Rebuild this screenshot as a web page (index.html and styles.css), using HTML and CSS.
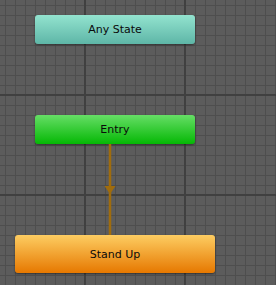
FILE: index.html
```html
<!DOCTYPE html>
<html>
<head>
<meta charset="utf-8">
<link rel="stylesheet" href="styles.css">
</head>
<body>
<div class="canvas">
  <div class="node any">Any State</div>
  <div class="node entry">Entry</div>
  <svg class="link" width="20" height="92" viewBox="0 0 20 92">
    <line x1="10" y1="0" x2="10" y2="92" stroke="#a06c0c" stroke-width="2.5"/>
    <polygon points="4.5,42 15.5,42 10,50" fill="#a06c0c"/>
  </svg>
  <div class="node stand">Stand Up</div>
</div>
</body>
</html>
```
FILE: styles.css
```css
html, body {
  margin: 0;
  padding: 0;
}
body {
  width: 276px;
  height: 285px;
  overflow: hidden;
  background: #5b5b5b;
}
.canvas {
  position: relative;
  width: 276px;
  height: 285px;
  background-color: #5c5c5c;
  background-image:
    linear-gradient(to right, transparent 84px, #404040 84px, #404040 86px, transparent 86px),
    linear-gradient(to bottom, transparent 94px, #404040 94px, #404040 96px, transparent 96px),
    linear-gradient(to right, transparent 5px, #4e4e4e 5px, #4e4e4e 6px, transparent 6px),
    linear-gradient(to bottom, transparent 5px, #4e4e4e 5px, #4e4e4e 6px, transparent 6px);
  background-size: 100px 100px, 100px 100px, 10px 10px, 10px 10px;
  background-position: 0 0, 0 0, 0 0, 0 0;
  font-family: "DejaVu Sans", Verdana, sans-serif;
  font-size: 11px;
  color: #0a0a0a;
}
.node {
  position: absolute;
  display: flex;
  align-items: center;
  justify-content: center;
  border-radius: 3px;
  box-shadow: 0 1px 2px rgba(0,0,0,0.45);
}
.any {
  left: 35px;
  top: 15px;
  width: 160px;
  height: 29px;
  background: linear-gradient(to bottom, #93e3cf, #5eb6a7);
}
.entry {
  left: 35px;
  top: 115px;
  width: 160px;
  height: 29px;
  background: linear-gradient(to bottom, #66de66, #05b805);
}
.stand {
  left: 15px;
  top: 235px;
  width: 200px;
  height: 38px;
  background: linear-gradient(to bottom, #fdcd62, #e67800);
}
.link {
  position: absolute;
  left: 100px;
  top: 144px;
}
```
